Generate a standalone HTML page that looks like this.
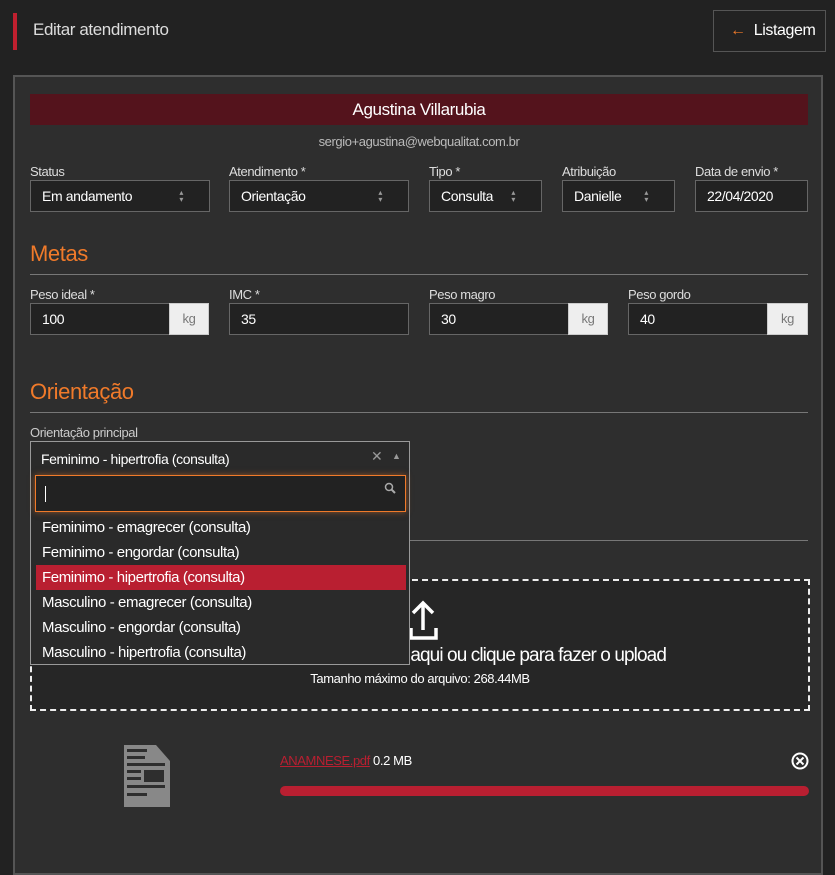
<!DOCTYPE html>
<html><head><meta charset="utf-8"><style>
*{box-sizing:border-box;margin:0;padding:0}
body{width:835px;height:833px;background:#222;font-family:"Liberation Sans Narrow","Liberation Sans",sans-serif;color:#fff;position:relative;overflow:hidden;letter-spacing:-0.4px}
.a{position:absolute}
.lbl{position:absolute;font-size:13px;color:#ddd;line-height:16px}
.in{position:absolute;height:32px;background:#222;border:1px solid #666;font-size:14px;color:#fff;line-height:30px;padding-left:11px}
.arr{position:absolute;right:26px;top:8px;font-size:8px;color:#999;line-height:7px}
.add{position:absolute;height:32px;background:#eee;border:1px solid #ccc;color:#777;font-size:13px;line-height:30px;text-align:center}
.h{position:absolute;left:30px;font-size:22px;color:#f07a2a}
.hr{position:absolute;left:30px;width:778px;height:1px;background:#777}
.opt{position:absolute;left:5px;width:370px;height:25px;line-height:25px;padding-left:6px;font-size:15px;color:#fff}
</style></head><body>
<div class="a" style="left:13px;top:13px;width:4px;height:37px;background:#c0202f"></div>
<div class="a" style="left:33px;top:20px;font-size:17px;color:#ddd">Editar atendimento</div>
<div class="a" style="left:713px;top:10px;width:113px;height:42px;border:1px solid #555;background:#222;font-size:16px;line-height:40px;padding-left:16px"><span style="color:#f07a2a">&#8592;</span>&nbsp; Listagem</div>
<div class="a" style="left:13px;top:75px;width:810px;height:800px;background:#2e2e2e;border:2px solid #555"></div>
<div class="a" style="left:30px;top:94px;width:778px;height:31px;background:#54131c;text-align:center;font-size:17px;line-height:31px">Agustina Villarubia</div>
<div class="a" style="left:30px;top:134px;width:778px;text-align:center;font-size:13px;color:#bbb">sergio+agustina@webqualitat.com.br</div>

<div class="lbl" style="left:30px;top:164px">Status</div>
<div class="lbl" style="left:229px;top:164px">Atendimento *</div>
<div class="lbl" style="left:429px;top:164px">Tipo *</div>
<div class="lbl" style="left:562px;top:164px">Atribuição</div>
<div class="lbl" style="left:695px;top:164px">Data de envio *</div>
<div class="in" style="left:30px;top:180px;width:180px">Em andamento<span class="arr">▴<br>▾</span></div>
<div class="in" style="left:229px;top:180px;width:180px">Orientação<span class="arr">▴<br>▾</span></div>
<div class="in" style="left:429px;top:180px;width:113px">Consulta<span class="arr">▴<br>▾</span></div>
<div class="in" style="left:562px;top:180px;width:113px">Danielle<span class="arr">▴<br>▾</span></div>
<div class="in" style="left:695px;top:180px;width:113px">22/04/2020</div>

<div class="h" style="top:241px">Metas</div>
<div class="hr" style="top:274px"></div>
<div class="lbl" style="left:30px;top:287px">Peso ideal *</div>
<div class="lbl" style="left:229px;top:287px">IMC *</div>
<div class="lbl" style="left:429px;top:287px">Peso magro</div>
<div class="lbl" style="left:628px;top:287px">Peso gordo</div>
<div class="in" style="left:30px;top:303px;width:140px">100</div><div class="add" style="left:169px;top:303px;width:40px">kg</div>
<div class="in" style="left:229px;top:303px;width:180px">35</div>
<div class="in" style="left:429px;top:303px;width:140px">30</div><div class="add" style="left:568px;top:303px;width:40px">kg</div>
<div class="in" style="left:628px;top:303px;width:140px">40</div><div class="add" style="left:767px;top:303px;width:41px">kg</div>

<div class="h" style="top:379px">Orientação</div>
<div class="hr" style="top:412px"></div>
<div class="lbl" style="left:30px;top:425px;color:#ccc">Orientação principal</div>
<div class="hr" style="top:540px"></div>

<div class="a" style="left:30px;top:579px;width:780px;height:132px;border:2px dashed #eee;background:#262626"></div>
<svg class="a" style="left:405px;top:600px" width="36" height="42" viewBox="0 0 36 42"><path d="M18 30V4M8 13L18 3L28 13M6 28v10h25V28" fill="none" stroke="#fff" stroke-width="3.5"/></svg>
<div class="a" style="left:100px;top:645px;width:566px;text-align:right;font-size:19px;color:#fff;white-space:nowrap;letter-spacing:-0.9px">Arraste e solte aqui ou clique para fazer o upload</div>
<div class="a" style="left:30px;top:671px;width:780px;text-align:center;font-size:13px">Tamanho máximo do arquivo: 268.44MB</div>

<div class="a" style="left:30px;top:441px;width:380px;height:224px;background:#2a2a2a;border:1px solid #999">
<div class="a" style="left:10px;top:9px;font-size:14px">Feminimo - hipertrofia (consulta)</div>
<div class="a" style="left:340px;top:6px;font-size:14px;color:#999">✕</div>
<div class="a" style="left:361px;top:9px;font-size:9px;color:#999">▲</div>
<div class="a" style="left:4px;top:33px;width:371px;height:37px;border:1px solid #f07a2a;background:#222;box-shadow:0 0 6px rgba(240,122,42,.5)"><div class="a" style="left:9px;top:10px;width:1px;height:16px;background:#fff"></div><svg class="a" style="left:348px;top:6px" width="12" height="12"><circle cx="5" cy="5" r="3.5" fill="none" stroke="#aaa" stroke-width="1.5"/><path d="M7.5 7.5L11 11" stroke="#aaa" stroke-width="2"/></svg></div>
<div class="opt" style="top:73px">Feminimo - emagrecer (consulta)</div>
<div class="opt" style="top:98px">Feminimo - engordar (consulta)</div>
<div class="opt" style="top:123px;background:#b91f31">Feminimo - hipertrofia (consulta)</div>
<div class="opt" style="top:148px">Masculino - emagrecer (consulta)</div>
<div class="opt" style="top:173px">Masculino - engordar (consulta)</div>
<div class="opt" style="top:198px">Masculino - hipertrofia (consulta)</div>
</div>

<svg class="a" style="left:124px;top:745px" width="46" height="62" viewBox="0 0 46 62"><path d="M0 0H32L46 16V62H0Z" fill="#888"/><g fill="#2e2e2e"><rect x="3" y="4" width="20" height="3"/><rect x="3" y="11" width="18" height="3"/><rect x="3" y="18" width="38" height="3"/><rect x="3" y="25" width="14" height="3"/><rect x="3" y="32" width="14" height="3"/><rect x="20" y="25" width="20" height="12"/><rect x="3" y="40" width="38" height="3"/><rect x="3" y="48" width="20" height="3"/></g></svg>
<div class="a" style="left:280px;top:753px;font-size:13px"><span style="color:#b91f31;text-decoration:underline">ANAMNESE.pdf</span> 0.2 MB</div>
<svg class="a" style="left:791px;top:752px" width="18" height="18"><circle cx="9" cy="9" r="7.5" fill="none" stroke="#fff" stroke-width="2"/><path d="M5.5 5.5l7 7M12.5 5.5l-7 7" stroke="#fff" stroke-width="2"/></svg>
<div class="a" style="left:280px;top:786px;width:529px;height:10px;border-radius:5px;background:#b91f31"></div>
</body></html>
